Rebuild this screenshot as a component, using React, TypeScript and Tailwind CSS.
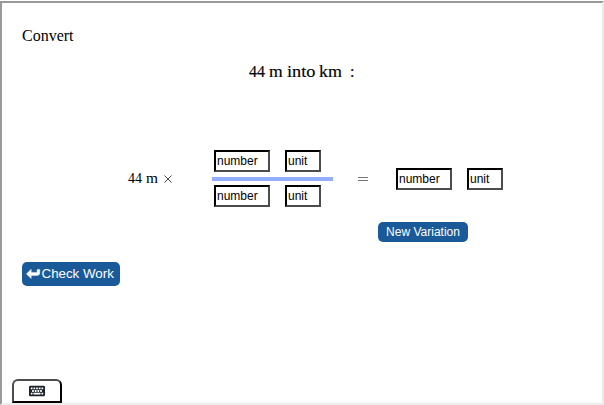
import { FaKeyboard } from "react-icons/fa";

function Field({ label, wide }: { label: string; wide?: boolean }) {
  return (
    <input
      type="text"
      defaultValue={label}
      className={`block h-[22px] border-2 border-t-black border-l-black border-r-[#4c4c4c] border-b-[#4c4c4c] bg-white px-px text-[12px] leading-[18px] text-black outline-none ${wide ? "w-[56px]" : "w-[36px]"}`}
    />
  );
}

function Pair() {
  return (
    <div className="flex gap-[15px]">
      <Field label="number" wide />
      <Field label="unit" />
    </div>
  );
}

export default function App() {
  return (
    <div className="h-[405px] w-[604px] bg-white pt-px font-['Liberation_Sans',Arial,sans-serif]">
      <main className="flex h-[404px] flex-col border-2 border-t-[#999] border-l-[#999] border-r-[#ededed] border-b-[#ededed]">
        <p className="mt-[23px] h-5 pl-5 font-['Liberation_Serif',serif] text-[16px] leading-5 text-black">Convert</p>
        <div className="mt-[16px] flex h-5 pl-[247px] font-['Liberation_Serif',serif] text-[16px] leading-5 text-black [-webkit-text-stroke:0.15px_black]">
          <span className="w-5">44</span>
          <span className="w-[17.5px] origin-left scale-x-[1.1]">m</span>
          <span className="w-[32.5px] origin-left scale-x-[1.14]">into</span>
          <span className="w-[31px] origin-left scale-x-[1.12]">km</span>
          <span>:</span>
        </div>
        <div className="mt-[65px] flex h-[63px] items-center">
          <div className="flex w-[209.5px] shrink-0 pl-[126px] font-['Liberation_Serif',serif] text-[14px] leading-5 text-black">
            <span className="w-[18px] shrink-0">44</span>
            <span className="w-[18px] shrink-0 origin-left scale-x-[1.1]">m</span>
            <svg className="mt-[6.5px] h-[8px] w-[8px] shrink-0" viewBox="0 0 8 8" stroke="#333" strokeWidth=".9">
              <path d="M.5.5l7 7M7.5.5l-7 7" />
            </svg>
          </div>
          <div className="w-[121.5px] shrink-0">
            <div className="pl-[2.5px]"><Pair /></div>
            <div className="mt-[5px] mb-1 h-1 bg-[#94aeff]" />
            <div className="pl-[2.5px]"><Pair /></div>
          </div>
          <div className="ml-[25px] h-1 w-[10px] shrink-0 border-y border-[#777]" />
          <div className="ml-[28px]"><Pair /></div>
        </div>
        <button className="mt-3 ml-[376px] h-5 w-[90px] shrink-0 rounded-[5px] bg-[#1a5a99] text-[12px] leading-5 text-white">New Variation</button>
        <button className="mt-5 ml-5 flex h-6 w-[98px] shrink-0 items-center rounded-[5px] bg-[#1a5a99] pl-1 text-[13.33px] text-white">
          <svg className="mr-[0.5px] h-[14px] w-[15px]" viewBox="0 0 15 14">
            <path d="M5.2 2.2v3.2h5.9V2.4h2.7v3.3q0 2.7-2.7 2.7H5.2v3.2L.4 6.9z" fill="white" stroke="white" strokeWidth=".4" strokeLinejoin="round" />
          </svg>
          Check Work
        </button>
        <button className="mt-auto ml-[10px] flex h-6 w-[50px] shrink-0 items-center justify-center rounded-t-[6px] border-2 border-t-[#4c4c4c] border-l-[#4c4c4c] border-r-black border-b-black bg-white">
          <FaKeyboard className="h-4 w-4 text-[#1a202c]" />
        </button>
      </main>
    </div>
  );
}
